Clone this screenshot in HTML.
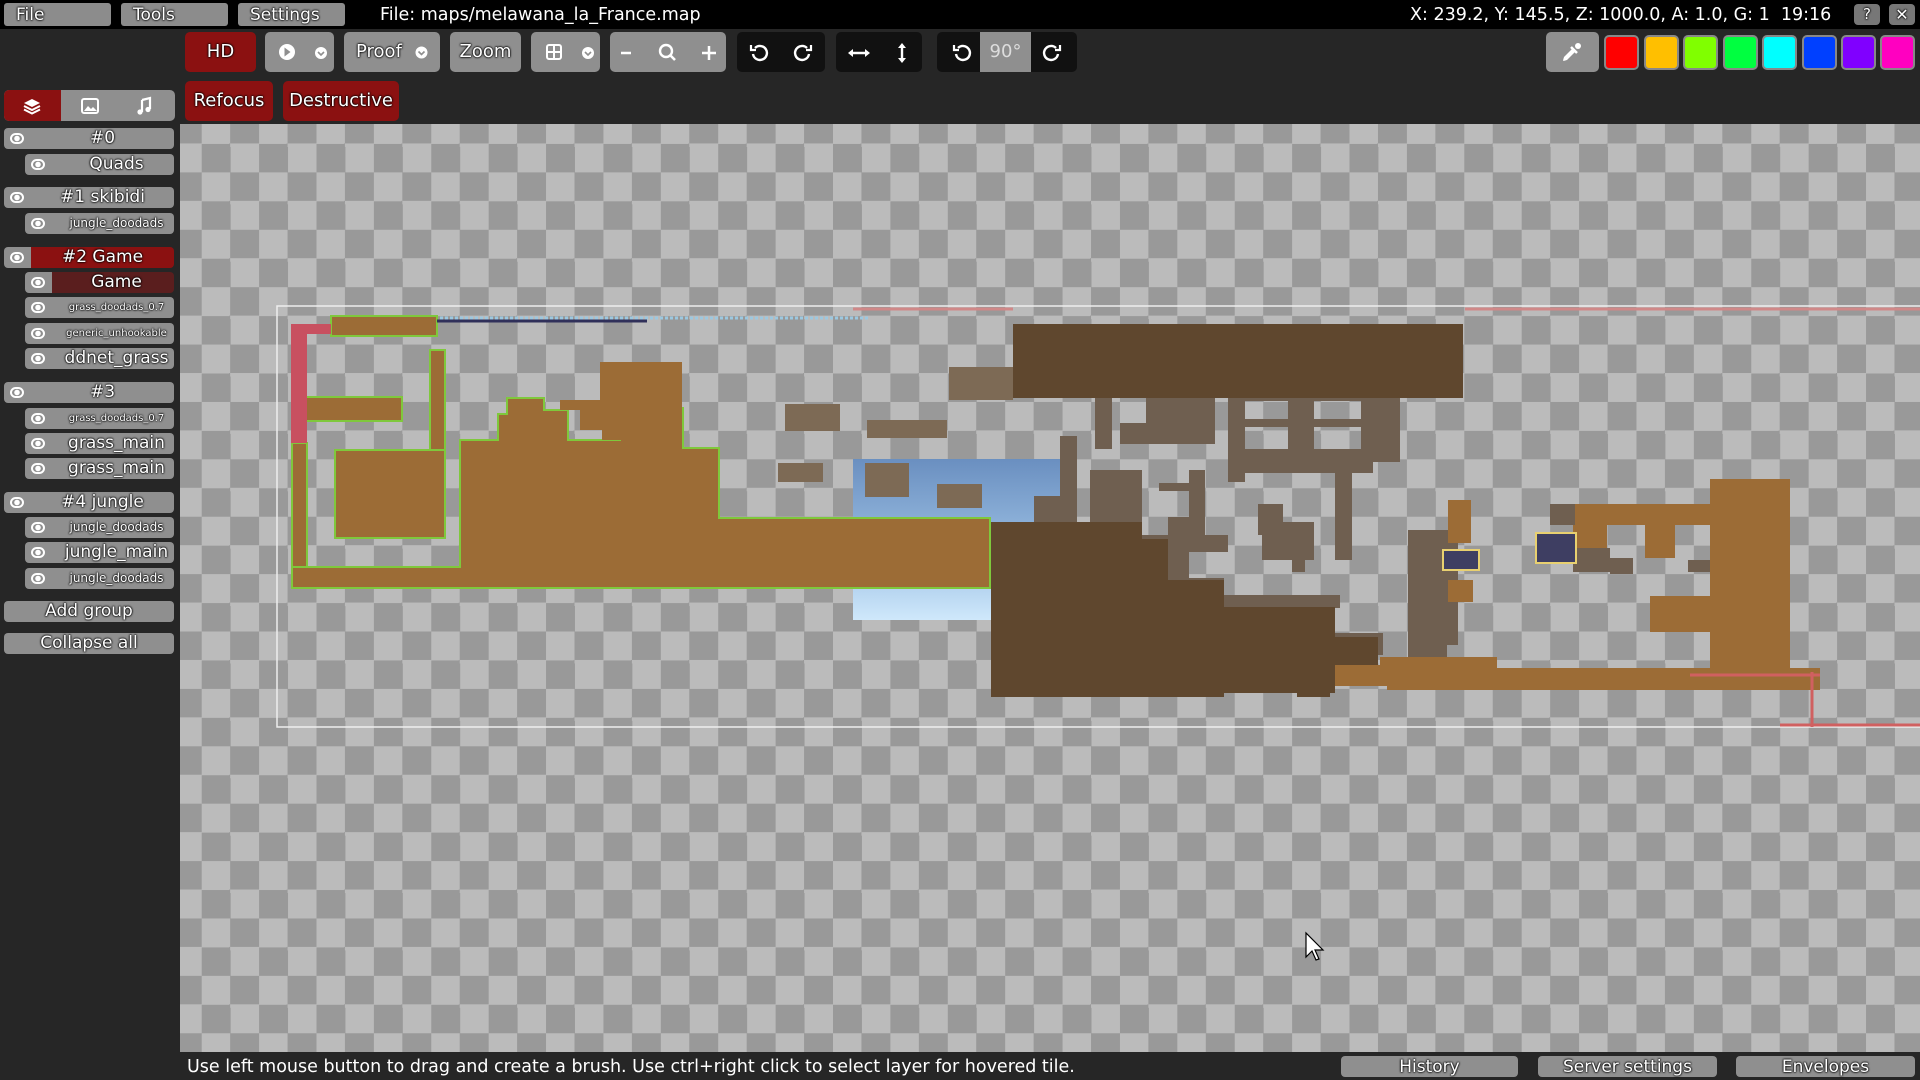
<!DOCTYPE html>
<html><head><meta charset="utf-8">
<style>
*{margin:0;padding:0;box-sizing:border-box}
body{width:1920px;height:1080px;background:#262626;overflow:hidden;position:relative;font-family:"DejaVu Sans","Liberation Sans",sans-serif;color:#fff}
.t{text-shadow:0 0 2px #000,0 0 2px #000,0 0 1px #000}
.abs{position:absolute}
#top{left:0;top:0;width:1920px;height:29px;background:#000}
.menu{position:absolute;top:3px;height:23px;background:#8c8c8c;border-radius:3px;font-size:17px;line-height:24px;padding-left:12px}
.btn{position:absolute;top:32px;height:40px;background:#8f8f8f;border-radius:5px;font-size:18px;line-height:40px;text-align:center}
.dk{background:#111}
.red{background:#8b1111}
.lay{position:absolute;height:21px;background:#8f8f8f;border-radius:4px;font-size:17px;line-height:21px;text-align:center;padding-left:27px}
.sub{left:25px;width:149px;padding-left:34px}
.grp{left:4px;width:170px}
.eye{position:absolute;left:6px;top:5px;width:14px;height:11px;border:2px solid #fff;border-radius:50%/60%;background:radial-gradient(circle,#fff 0 2.5px,transparent 3px)}
#canvas{left:180px;top:124px;width:1740px;height:928px;background-color:#bbb;background-image:repeating-conic-gradient(#999 0 25%,#bbb 0 50%);background-size:57.4px 57.4px;background-position:-35.7px -9px}
.bb{position:absolute;top:1056px;height:21px;background:#8f8f8f;border-radius:4px;font-size:17px;line-height:22px;text-align:center}
.sw{position:absolute;top:35px;width:35px;height:35px;border:2px solid #888;border-radius:5px}
</style></head><body>
<div id="top" class="abs"></div>
<div class="menu t" style="left:4px;width:107px">File</div>
<div class="menu t" style="left:121px;width:107px">Tools</div>
<div class="menu t" style="left:238px;width:107px">Settings</div>
<div class="abs" style="left:380px;top:3px;font-size:17.5px;line-height:24px">File: maps/melawana_la_France.map</div>
<div class="abs" style="left:1410px;top:3px;font-size:17.5px;line-height:24px">X: 239.2, Y: 145.5, Z: 1000.0, A: 1.0, G: 1&nbsp;&nbsp;19:16</div>
<div class="abs t" style="left:1854px;top:4px;width:26px;height:21px;background:#777;border-radius:4px;text-align:center;font-size:15px;line-height:21px">?</div>
<div class="abs t" style="left:1889px;top:4px;width:26px;height:21px;background:#777;border-radius:4px;text-align:center;font-size:16px;line-height:21px">✕</div>

<div class="btn red t" style="left:185px;width:71px">HD</div>
<div class="btn" style="left:265px;width:69px"><svg width="69" height="40"><circle cx="22" cy="20" r="8" fill="#fff"/><path d="M19.5 15.5l6 4.5-6 4.5z" fill="#8f8f8f"/><circle cx="56" cy="21" r="6" fill="#fff"/><path d="M53 20l3 3 3-3" stroke="#8f8f8f" stroke-width="1.6" fill="none"/></svg></div>
<div class="btn t" style="left:344px;width:96px;text-align:left;padding-left:12px">Proof<svg class="abs" style="left:71px;top:14px" width="13" height="13"><circle cx="6.5" cy="6.5" r="6" fill="#fff"/><path d="M3.5 5.5l3 3 3-3" stroke="#8f8f8f" stroke-width="1.6" fill="none"/></svg></div>
<div class="btn t" style="left:450px;width:71px">Zoom</div>
<div class="btn" style="left:531px;width:69px"><svg width="69" height="40"><rect x="16" y="13" width="14" height="14" rx="2" fill="none" stroke="#fff" stroke-width="2"/><path d="M23 13v14M16 20h14" stroke="#fff" stroke-width="2"/><circle cx="57" cy="21" r="6" fill="#fff"/><path d="M54 20l3 3 3-3" stroke="#8f8f8f" stroke-width="1.6" fill="none"/></svg></div>
<div class="btn" style="left:610px;width:116px"><svg width="116" height="40"><path d="M11 21h10" stroke="#fff" stroke-width="2.5"/><circle cx="56" cy="19" r="6" fill="none" stroke="#fff" stroke-width="2.4"/><path d="M60 23l5 5" stroke="#fff" stroke-width="2.6"/><path d="M99 14v14M92 21h14" stroke="#fff" stroke-width="2.5"/></svg></div>
<div class="btn dk" style="left:737px;width:88px"><svg width="88" height="40"><path d="M18 16a7 7 0 1 1-2 6" fill="none" stroke="#fff" stroke-width="2.4"/><path d="M14 13v5h5" fill="none" stroke="#fff" stroke-width="2.2"/><path d="M70 16a7 7 0 1 0 2 6" fill="none" stroke="#fff" stroke-width="2.4"/><path d="M74 13v5h-5" fill="none" stroke="#fff" stroke-width="2.2"/></svg></div>
<div class="btn dk" style="left:836px;width:86px"><svg width="86" height="40"><path d="M14 21h18" stroke="#fff" stroke-width="2.4"/><path d="M12 21l5-4v8zM34 21l-5-4v8z" fill="#fff"/><path d="M66 13v16" stroke="#fff" stroke-width="2.4"/><path d="M66 11l-4 5h8zM66 31l-4-5h8z" fill="#fff"/></svg></div>
<div class="btn dk" style="left:937px;width:140px"><div class="abs" style="left:43px;top:0;width:51px;height:40px;background:#8f8f8f;color:#ddd" >90°</div><svg class="abs" style="left:0;top:0" width="140" height="40"><path d="M21 16a7 7 0 1 1-2 6" fill="none" stroke="#fff" stroke-width="2.4"/><path d="M17 13v5h5" fill="none" stroke="#fff" stroke-width="2.2"/><path d="M119 16a7 7 0 1 0 2 6" fill="none" stroke="#fff" stroke-width="2.4"/><path d="M123 13v5h-5" fill="none" stroke="#fff" stroke-width="2.2"/></svg></div>

<div class="btn" style="left:1546px;width:53px"><svg width="53" height="40"><path d="M18 28l10-10M25 15l6 6" stroke="#fff" stroke-width="2.5"/><path d="M17 29l1-4 9-9 3 3-9 9z" fill="#fff"/><circle cx="32" cy="14" r="3" fill="#fff"/></svg></div>
<div class="sw" style="left:1604px;background:#f00"></div>
<div class="sw" style="left:1644px;background:#ffbf00"></div>
<div class="sw" style="left:1683px;background:#80ff00"></div>
<div class="sw" style="left:1723px;background:#00ff40"></div>
<div class="sw" style="left:1762px;background:#0ff"></div>
<div class="sw" style="left:1802px;background:#0040ff"></div>
<div class="sw" style="left:1841px;background:#8000ff"></div>
<div class="sw" style="left:1880px;background:#ff00c0"></div>

<div class="abs" style="left:4px;top:90px;width:171px;height:31px;background:#8f8f8f;border-radius:5px"></div>
<div class="abs" style="left:4px;top:90px;width:57px;height:31px;background:#8b1111;border-radius:5px 0 0 5px"></div>
<svg class="abs" style="left:4px;top:90px" width="171" height="31"><path d="M28 9l8 4-8 4-8-4z" fill="#fff"/><path d="M20 16l8 4 8-4M20 19.5l8 4 8-4" stroke="#fff" stroke-width="2" fill="none"/><rect x="78" y="9" width="16" height="14" rx="2" fill="none" stroke="#fff" stroke-width="2"/><path d="M80 21l4-5 3 3 2-2 4 4z" fill="#fff"/><path d="M138 10l8-2v11" stroke="#fff" stroke-width="2.2" fill="none"/><path d="M138 10v12" stroke="#fff" stroke-width="2.2"/><circle cx="136" cy="22" r="2.6" fill="#fff"/><circle cx="144" cy="19.5" r="2.6" fill="#fff"/></svg>
<div class="btn red t" style="left:185px;top:81px;width:88px;height:40px">Refocus</div>
<div class="btn red t" style="left:283px;top:81px;width:116px;height:40px">Destructive</div>

<div class="lay grp t" style="top:128px">#0<span class="eye"></span></div>
<div class="lay sub t" style="top:154px">Quads<span class="eye"></span></div>
<div class="lay grp t" style="top:187px">#1 skibidi<span class="eye"></span></div>
<div class="lay sub t" style="top:213px;font-size:12px">jungle_doodads<span class="eye"></span></div>
<div class="lay grp t" style="top:247px;background:linear-gradient(90deg,#8f8f8f 27px,#8b1111 27px)">#2 Game<span class="eye"></span></div>
<div class="lay sub t" style="top:272px;background:linear-gradient(90deg,#8f8f8f 27px,#5a1e1e 27px)">Game<span class="eye"></span></div>
<div class="lay sub t" style="top:297px;font-size:10px">grass_doodads_0.7<span class="eye"></span></div>
<div class="lay sub t" style="top:323px;font-size:10px">generic_unhookable<span class="eye"></span></div>
<div class="lay sub t" style="top:348px">ddnet_grass<span class="eye"></span></div>
<div class="lay grp t" style="top:382px">#3<span class="eye"></span></div>
<div class="lay sub t" style="top:408px;font-size:10px">grass_doodads_0.7<span class="eye"></span></div>
<div class="lay sub t" style="top:433px">grass_main<span class="eye"></span></div>
<div class="lay sub t" style="top:458px">grass_main<span class="eye"></span></div>
<div class="lay grp t" style="top:492px">#4 jungle<span class="eye"></span></div>
<div class="lay sub t" style="top:517px;font-size:12px">jungle_doodads<span class="eye"></span></div>
<div class="lay sub t" style="top:542px">jungle_main<span class="eye"></span></div>
<div class="lay sub t" style="top:568px;font-size:12px">jungle_doodads<span class="eye"></span></div>
<div class="lay grp t" style="top:601px;padding-left:0">Add group</div>
<div class="lay grp t" style="top:633px;padding-left:0">Collapse all</div>

<div id="canvas" class="abs"></div>
<svg class="abs" style="left:0;top:0" width="1920" height="1080">
<defs><linearGradient id="sky" x1="0" y1="0" x2="0" y2="1"><stop offset="0" stop-color="#6a8fc0"/><stop offset="0.6" stop-color="#9cc0e4"/><stop offset="1" stop-color="#cfe8fb"/></linearGradient></defs>
<rect x="277" y="306" width="1650" height="421" fill="none" stroke="#eee" stroke-width="1.5"/>
<path d="M853 309h160M1465 309h460" stroke="#d08888" stroke-width="3"/>
<rect x="853" y="459" width="207" height="161" fill="url(#sky)"/>
<g fill="#9c6c36" stroke="#7fc83c" stroke-width="2">
<rect x="331" y="316" width="106" height="20"/>
<rect x="430" y="350" width="15" height="102"/>
<rect x="296" y="397" width="106" height="24"/>
<rect x="335" y="450" width="110" height="88"/>
<rect x="292" y="443" width="15" height="137"/>
<path d="M292 567h168v-127h38v-26h9v-16h37v12h24v30h52v-10h23v-22h40v40h36v70h271v70H292z"/>
</g>
<path d="M600 362h82v78h-80v-10h-22v-20h-20v-10h40z" fill="#9c6c36"/>
<rect x="291" y="324" width="16" height="119" fill="#c85060"/>
<rect x="291" y="324" width="40" height="10" fill="#c85060"/>
<path d="M437 321h210" stroke="#30305a" stroke-width="3"/>
<path d="M440 318h430" stroke="#9cc8e0" stroke-width="3" stroke-dasharray="3 2"/>
<g fill="#7d6a55"><rect x="785" y="404" width="55" height="27"/><rect x="867" y="420" width="80" height="18"/><rect x="778" y="463" width="45" height="19"/><rect x="865" y="463" width="44" height="34"/><rect x="937" y="484" width="45" height="24"/><rect x="949" y="367" width="64" height="33"/></g>
<g fill="#6f5f50">
<rect x="1095" y="397" width="17" height="52"/><rect x="1120" y="423" width="95" height="21"/><rect x="1146" y="397" width="69" height="47"/>
<path d="M1228 397h172v65h-27v11h-128v9h-17zM1245 401v18h43v-18zM1245 427v22h43v-22zM1314 401v18h47v-18zM1314 427v22h47v-22z" fill-rule="evenodd"/>
<rect x="1335" y="473" width="17" height="87"/><rect x="1060" y="436" width="17" height="89"/><rect x="1034" y="496" width="43" height="29"/>
<rect x="1090" y="470" width="52" height="55"/><rect x="1189" y="470" width="16" height="70"/><rect x="1159" y="483" width="46" height="8"/>
<rect x="1142" y="535" width="86" height="17"/><rect x="1168" y="517" width="21" height="63"/>
<rect x="1258" y="504" width="25" height="31"/><rect x="1262" y="522" width="52" height="38"/><rect x="1292" y="555" width="13" height="17"/>
<rect x="1181" y="578" width="43" height="20"/><rect x="1224" y="595" width="116" height="13"/><rect x="1335" y="633" width="48" height="22"/>
<rect x="1408" y="530" width="39" height="127"/><rect x="1447" y="530" width="11" height="115"/>
<rect x="1550" y="504" width="25" height="21"/><rect x="1573" y="548" width="37" height="24"/><rect x="1610" y="558" width="23" height="16"/><rect x="1688" y="560" width="22" height="12"/>
</g>
<rect x="1013" y="324" width="450" height="74" fill="#5f472e"/>
<path d="M991 522h151v17h26v41h56v27h111v30h43v48h-43v8h-38v4H1335v0h-5v-4h-106v4h-233z" fill="#5f472e"/>
<g fill="#9c6c36">
<path d="M1335 665h45v-8h117v11h213v-189h80v189h30v22h-433v-4h-52z"/>
<rect x="1448" y="500" width="23" height="43"/>
<rect x="1575" y="504" width="135" height="21"/><rect x="1573" y="525" width="34" height="23"/><rect x="1645" y="525" width="30" height="33"/>
<rect x="1650" y="596" width="60" height="36"/><rect x="1448" y="580" width="25" height="22"/>
</g>
<rect x="1536" y="533" width="40" height="30" fill="#3e3e62" stroke="#e8d070" stroke-width="2"/>
<rect x="1443" y="550" width="36" height="20" fill="#3e3e62" stroke="#e8d070" stroke-width="2"/>
<path d="M1812 672v55M1780 725h145M1690 675h130" stroke="#d06060" stroke-width="3"/>
<path d="M1306 933v24l6-6 4 9 3-1-4-9h8z" fill="#fff" stroke="#000" stroke-width="1.2"/>
</svg>

<div class="abs" style="left:187px;top:1054px;font-size:17.5px;line-height:26px;white-space:nowrap">Use left mouse button to drag and create a brush. Use ctrl+right click to select layer for hovered tile.</div>
<div class="bb t" style="left:1341px;width:177px">History</div>
<div class="bb t" style="left:1538px;width:179px">Server settings</div>
<div class="bb t" style="left:1736px;width:179px">Envelopes</div>
</body></html>
